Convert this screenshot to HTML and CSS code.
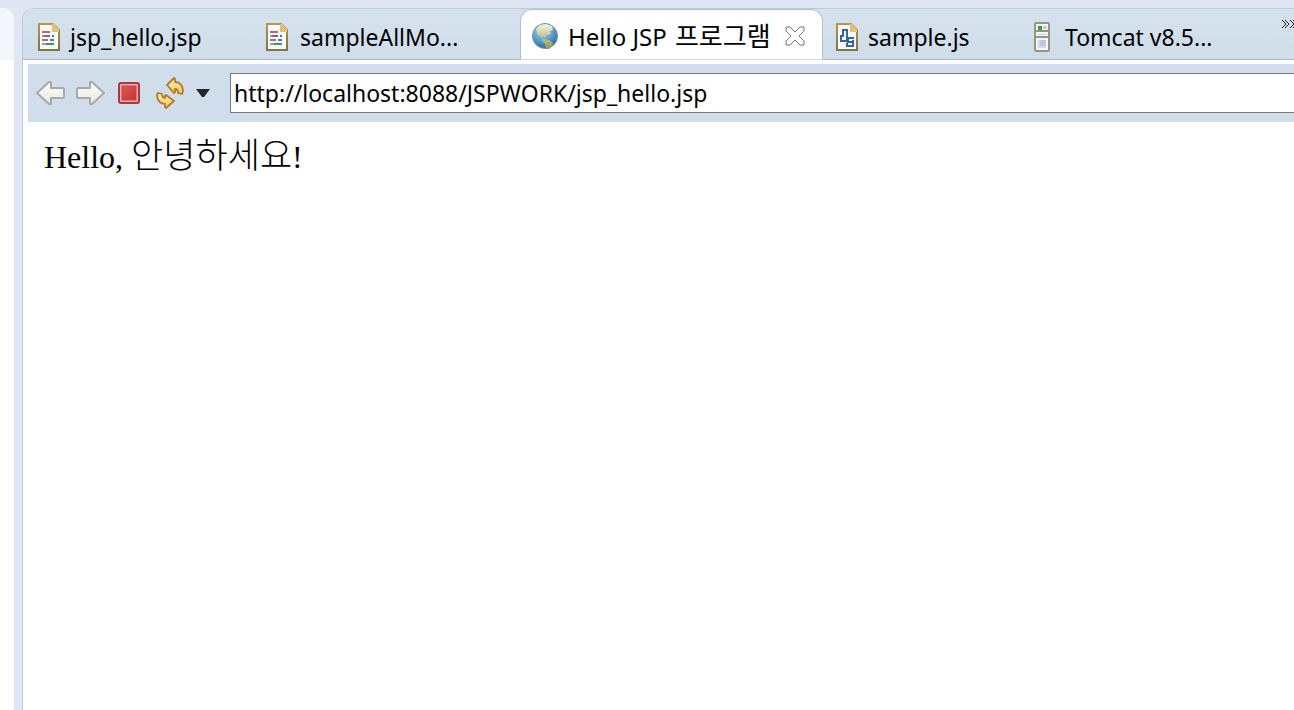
FILE: index.html
```html
<!DOCTYPE html>
<html lang="ko">
<head>
<meta charset="utf-8">
<title>Hello JSP 프로그램</title>
<link rel="stylesheet" href="styles.css">
</head>
<body>
<svg class="defs" aria-hidden="true">
  <defs>
    <linearGradient id="edge" x1="0" y1="0" x2="0" y2="1"><stop offset="0" stop-color="#b79449"/><stop offset="1" stop-color="#7d7548"/></linearGradient>
    <linearGradient id="arrow" x1="0" y1="0" x2="0" y2="1"><stop offset="0" stop-color="#ffffff"/><stop offset="1" stop-color="#e6e6e4"/></linearGradient>
    <linearGradient id="gold" x1="0" y1="0" x2="0" y2="1"><stop offset="0" stop-color="#fff2ba"/><stop offset="1" stop-color="#f2c45c"/></linearGradient>
    <linearGradient id="red" x1="0" y1="0" x2="1" y2="1"><stop offset="0" stop-color="#dc5a55"/><stop offset="1" stop-color="#c9302f"/></linearGradient>
    <radialGradient id="sea" cx=".4" cy=".25" r=".8"><stop offset="0" stop-color="#b9dcef"/><stop offset=".5" stop-color="#62a4d0"/><stop offset="1" stop-color="#2a5f90"/></radialGradient>
    <linearGradient id="land" x1="0" y1="0" x2="0" y2="1"><stop offset="0" stop-color="#f3f2de"/><stop offset="1" stop-color="#8b984b"/></linearGradient>
    <symbol id="page" viewBox="0 0 22 28">
      <path d="M1 1h14l6 6v20H1z" fill="#f8faff" stroke="url(#edge)" stroke-width="2"/>
      <path d="M14 1h2l5 5v3h-7z" fill="#e3be74"/>
    </symbol>
    <symbol id="jsp" viewBox="0 0 22 28">
      <use href="#page" width="22" height="28"/>
      <path d="M4 9h8M4 17h6" stroke="#d85b62" stroke-width="2"/>
      <path d="M6 13h6M14 13h2M12 17h4" stroke="#5374a4" stroke-width="2"/>
      <path d="M4 13h2M4 21h4" stroke="#75aeb0" stroke-width="2"/>
      <path d="M8 21h8" stroke="#489651" stroke-width="2"/>
    </symbol>
  </defs>
</svg>
<div class="workbench">
  <aside class="side"><div class="side-head"></div></aside>
  <main class="editor">
    <nav class="tabs" role="tablist" aria-label="Editors">
      <button class="tab tab-first" role="tab"><svg class="doc"><use href="#jsp"/></svg><span>jsp_hello.jsp</span></button>
      <button class="tab tab-second" role="tab"><svg class="doc"><use href="#jsp"/></svg><span>sampleAllMo...</span></button>
      <div class="tab tab-active">
        <button class="tab-label" role="tab" aria-selected="true">
          <svg class="globe" viewBox="0 0 26 26"><circle cx="13" cy="13" r="12.5" fill="url(#sea)" stroke="#6f93a8"/><path d="M4 6l4-4 6-1 6 2 1 4-3 1 1 3-4 1-2 3-3-1 1 2 6 1 4 3-2 4-3 3-2-1-1-5-3-3 1-3-5-3z" fill="url(#land)"/></svg>
          <span>Hello JSP <span class="hangul">프로그램</span></span>
        </button>
        <button class="close" aria-label="Close"><svg viewBox="0 0 20 20"><path d="M1 1h4l5 5 5-5h4v4l-5 5 5 5v4h-4l-5-5-5 5H1v-4l5-5-5-5z" fill="#fff" stroke="#777"/></svg></button>
      </div>
      <button class="tab tab-script" role="tab"><svg class="doc" viewBox="0 0 22 28"><use href="#page" width="22" height="28"/><path d="M7 7h4v11H5v-5h2zM18 15h-6v4h5v4h-6v-3M17 19v-2" fill="none" stroke="#346699" stroke-width="2"/></svg><span>sample.js</span></button>
      <button class="tab tab-server" role="tab"><svg class="server" viewBox="0 0 16 30"><rect x="1" y="1" width="14" height="28" rx="1" fill="#f4f6ff" stroke="#92997b" stroke-width="2"/><path d="M2 9h12M2 15h12" stroke="#92997b" stroke-width="2"/><path d="M9 4h4v3H9zM4 12h9v1H4z" fill="#c7cbea"/><path d="M4 4h4v4H4z" fill="#3a9c42"/><path d="M4 18h8v8H4z" fill="#d3d8f2"/><path d="M6 18h6v6H6z" fill="#bfc4e6"/></svg><span>Tomcat v8.5...</span></button>
      <button class="more" aria-label="Show more editors"><svg viewBox="0 0 14 10"><path d="M1 1l4 4-4 4M4 1l4 4-4 4M9 1l4 4-4 4M12 1l4 4-4 4" fill="none" stroke="#222"/></svg></button>
    </nav>
    <form class="toolbar">
      <button type="button" class="tool" aria-label="Back"><svg class="arrow" viewBox="0 0 30 26"><path d="M1 13L13 2h2v6h12l1 1v8l-1 1H15v6h-2z" fill="url(#arrow)" stroke="#aaa9a7" stroke-width="2" stroke-linejoin="round"/></svg></button>
      <button type="button" class="tool" aria-label="Forward"><svg class="arrow" viewBox="0 0 30 26"><path d="M28 13L16 2h-2v6H2L1 9v8l1 1h12v6h2z" fill="url(#arrow)" stroke="#aaa9a7" stroke-width="2" stroke-linejoin="round"/></svg></button>
      <button type="button" class="tool tool-stop" aria-label="Stop"><svg class="stop" viewBox="0 0 22 22"><rect x="1" y="1" width="20" height="20" rx="2" fill="#f0aaa8" stroke="#a43a43" stroke-width="2"/><rect x="4" y="4" width="14" height="14" fill="url(#red)" stroke="#b9484b"/></svg></button>
      <button type="button" class="tool" aria-label="Refresh"><svg class="refresh" viewBox="0 0 28 32"><g fill="url(#gold)" stroke="#b47a22" stroke-width="1.8" stroke-linejoin="round"><path d="M11 8l7-7 1 1v3c5 0 8 4 8 9l-1 3-4-1c0-3-1-4-3-4v3l-1 1z"/><path d="M18 24l-8 7-1-1v-3c-5 0-8-4-8-9l1-2 4 1c0 3 1 4 3 4v-2l1-1z"/></g></svg></button>
      <button type="button" class="tool" aria-label="Refresh options"><svg class="caret" viewBox="0 0 14 8"><path d="M0 0h14L8 8H6z" fill="#222629"/></svg></button>
      <input class="address" type="text" aria-label="Address" value="http://localhost:8088/JSPWORK/jsp_hello.jsp">
    </form>
    <article class="page">Hello, <span class="greeting">안녕하세요</span>!</article>
  </main>
</div>
</body>
</html>
```
FILE: styles.css
```css
* { box-sizing: border-box; }
body {
  margin: 0;
  background: #e1e6f4;
  color: #000;
  font: 23px/32px "Noto Sans", "Noto Sans CJK KR", sans-serif;
}
button { padding: 0; border: 0; background: none; color: inherit; font: inherit; }
svg { display: block; flex: none; }
.defs { position: absolute; width: 0; height: 0; }
.workbench { display: flex; gap: 8px; min-height: 100vh; padding-top: 8px; overflow: hidden; }
.side { flex: 0 0 14px; background: #fff; border-top-right-radius: 12px; }
.side-head { height: 52px; background: #f4f6fc; border-top-right-radius: 12px; }
.editor {
  flex: 1;
  min-width: 0;
  overflow: hidden;
  background: #fff;
  border: 1px solid #bdc8d9;
  border-width: 1px 0 0 1px;
  border-top-left-radius: 12px;
}
.tabs {
  display: flex;
  height: 51px;
  background: linear-gradient(#d5e2ee, #cfddea);
  border-bottom: 1px solid #aebdce;
}
.tab { display: flex; flex: none; align-items: center; gap: 10px; padding: 5px 0 0 15px; white-space: nowrap; }
.tab-first { width: 228px; }
.tab-second { width: 269px; gap: 12px; }
.tab-active {
  width: 303px;
  gap: 14px;
  margin-bottom: -1px;
  padding: 3px 0 0 11px;
  background: #fff;
  border: 1px solid #b1becf;
  border-bottom-color: #d2dce8;
  border-radius: 12px 12px 0 0;
  font-size: 24px;
}
.tab-script { width: 196px; padding-left: 13px; }
.tab-server { width: 250px; gap: 15px; }
.tab-label { display: flex; align-items: center; gap: 10px; }
.hangul { margin-left: 2px; font-family: "Noto Sans CJK KR", sans-serif; font-size: 26px; }
.doc { width: 22px; height: 28px; }
.globe { width: 26px; height: 26px; }
.close svg { width: 20px; height: 20px; }
.server { width: 16px; height: 30px; }
.more { display: flex; flex: none; padding-top: 10px; margin-left: 12px; }
.more svg { width: 14px; height: 10px; }
.toolbar {
  display: flex;
  align-items: center;
  gap: 10px;
  height: 58px;
  margin: 4px 0 0 5px;
  padding: 0 0 1px 8px;
  background: #d0ddea;
}
.arrow { width: 30px; height: 26px; }
.tool-stop { margin-left: 2px; }
.stop { width: 22px; height: 22px; }
.refresh { width: 28px; height: 32px; margin-left: 6px; }
.caret { width: 14px; height: 8px; margin-left: 2px; }
.address {
  flex: 1;
  min-width: 0;
  height: 40px;
  margin-left: 10px;
  padding: 0 3px;
  border: 1px solid #777c82;
  border-right: 0;
  border-radius: 0;
  background: #fff;
  color: #000;
  font: inherit;
}
.page { padding: 9px 21px; font: 32px/44px "Liberation Serif", "Noto Sans CJK KR", serif; }
.greeting { font-family: "Noto Sans CJK KR", sans-serif; font-size: 35px; font-weight: 300; }
```
